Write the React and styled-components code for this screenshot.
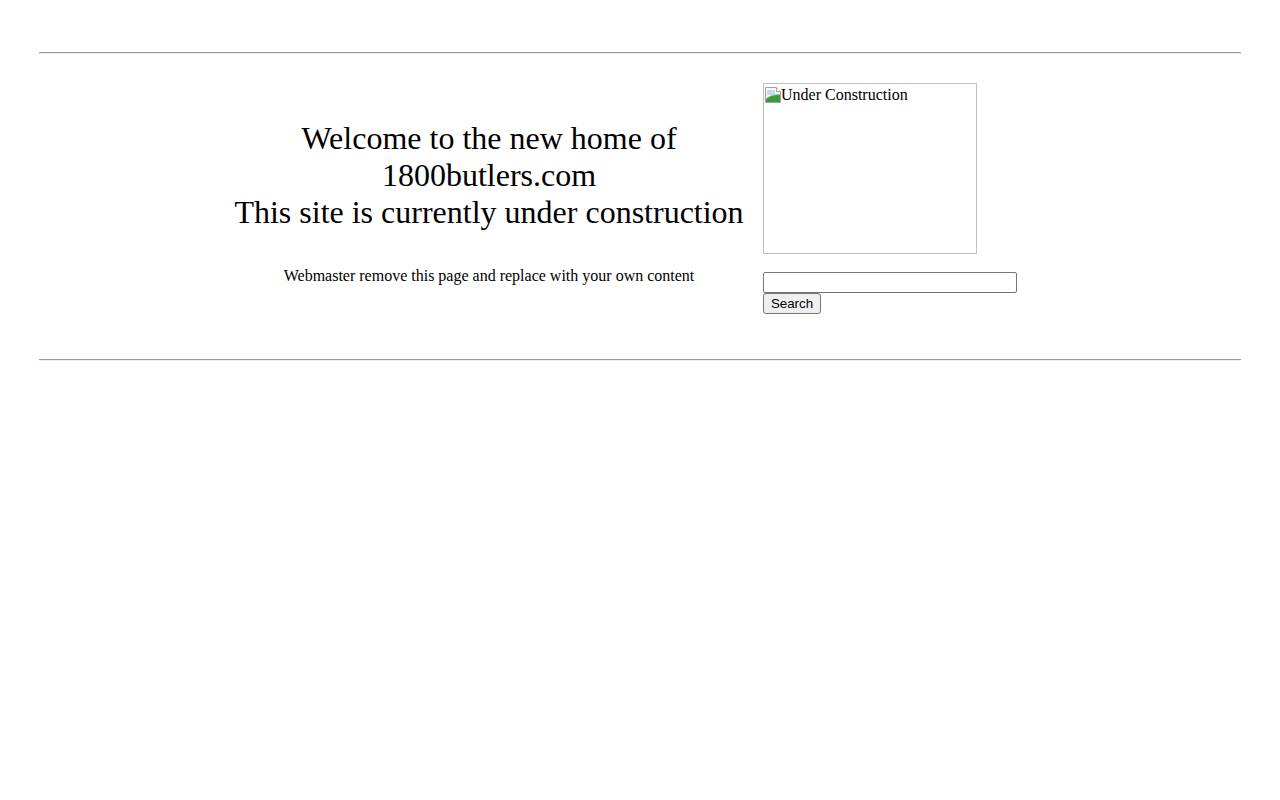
import React from 'react'
import styled, { createGlobalStyle } from 'styled-components'

const GlobalStyle = createGlobalStyle`
  body {
    margin: 8px;
    background: #fff;
    color: #000;
    font-family: "Liberation Serif", "Times New Roman", serif;
    font-size: 16px;
  }
`

const App = () => {
  return (
    <>
      <GlobalStyle />
      <Page>
        <Rule />
        <Layout>
          <Heading>
            Welcome to the new home of
            <br />
            1800butlers.com
            <br />
            This site is currently under construction
          </Heading>
          <ImageCell>
            <BrokenImage>
              <BrokenIcon />
              <AltText>Under Construction</AltText>
            </BrokenImage>
          </ImageCell>
          <Note>Webmaster remove this page and replace with your own content</Note>
          <SearchForm onSubmit={(e) => e.preventDefault()}>
            <SearchInput type="text" />
            <SearchButton type="submit">Search</SearchButton>
          </SearchForm>
        </Layout>
        <Rule $bottom />
      </Page>
    </>
  )
}

export default App

const BrokenIcon = () => (
  <IconSvg width="16" height="16" viewBox="0 0 16 16">
    <path d="M0.5 0.5h11l4 4v11h-15z" fill="#f4f7fb" stroke="#a0a0a0" />
    <path d="M11.5 0.5v4h4" fill="#ffffff" stroke="#a0a0a0" />
    <path d="M2 3h8v5H2z" fill="#c9dcef" />
    <path d="M1 15V12c3.5-3.5 8.5-4.5 14-4.5V15z" fill="#3c9a38" />
    <path d="M1 12c3.5-3.5 8.5-4.5 14-4.5" stroke="#9ccf96" fill="none" />
  </IconSvg>
)

const Page = styled.div`
  padding-top: 36px;
`

const Rule = styled.hr`
  width: 95.1%;
  height: 0;
  border: none;
  border-top: 1px solid #9a9a9a;
  border-bottom: 1px solid #eeeeee;
  margin: ${(p) => (p.$bottom ? '45px' : '8px')} auto 8px;
`

const Layout = styled.div`
  display: grid;
  grid-template-columns: 528px 292px;
  grid-template-rows: 184px auto;
  column-gap: 10px;
  justify-content: center;
  margin-top: 29px;
`

const Heading = styled.div`
  align-self: center;
  text-align: center;
  font-size: 32px;
  line-height: 37px;
`

const ImageCell = styled.div`
  align-self: start;
`

const BrokenImage = styled.div`
  box-sizing: border-box;
  width: 214px;
  height: 171px;
  border: 1px solid #c0c0c0;
  padding: 2px 1px;
  display: flex;
  align-items: flex-start;
  line-height: 18px;
`

const IconSvg = styled.svg`
  flex: none;
  margin-top: 1px;
`

const AltText = styled.span`
  font-size: 16px;
`

const Note = styled.div`
  text-align: center;
  font-size: 16px;
  line-height: 18px;
`

const SearchForm = styled.form`
  display: flex;
  flex-direction: column;
  align-items: flex-start;
  padding-top: 5px;
  margin: 0;
`

const SearchInput = styled.input`
  box-sizing: border-box;
  width: 254px;
  height: 21px;
  margin: 0;
  padding: 1px 2px;
  border: 1px solid #767676;
  border-radius: 2px;
  font-family: "Liberation Sans", Arial, sans-serif;
  font-size: 13.33px;
`

const SearchButton = styled.button`
  box-sizing: border-box;
  width: 58px;
  height: 21px;
  margin: 0;
  padding: 1px 6px;
  background: #efefef;
  border: 1px solid #767676;
  border-radius: 3px;
  color: #000;
  font-family: "Liberation Sans", Arial, sans-serif;
  font-size: 13.33px;
  cursor: pointer;
`
